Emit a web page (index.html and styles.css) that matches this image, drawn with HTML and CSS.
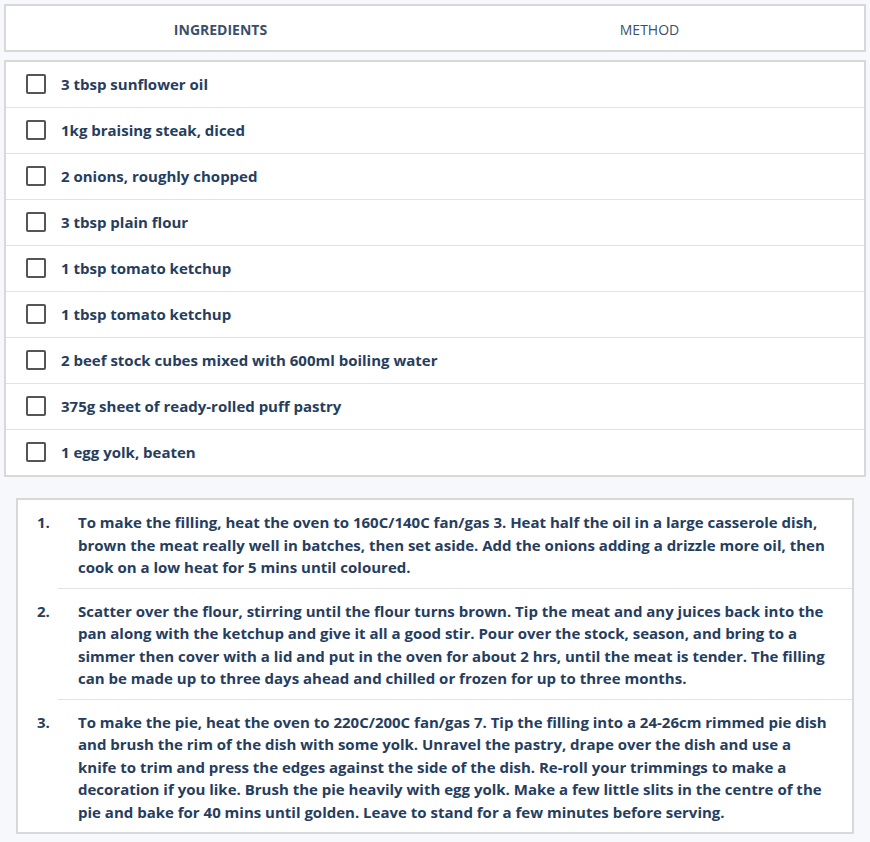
FILE: index.html
```html
<!DOCTYPE html>
<html lang="en">
<head>
<meta charset="utf-8">
<title>Recipe</title>
<link rel="stylesheet" href="styles.css">
</head>
<body>
<div class="page">
  <nav class="tabs">
    <div class="tab active">INGREDIENTS</div>
    <div class="tab">METHOD</div>
  </nav>
  <ul class="ingredients">
    <li><span class="check"></span><span>3 tbsp sunflower oil</span></li>
    <li><span class="check"></span><span>1kg braising steak, diced</span></li>
    <li><span class="check"></span><span>2 onions, roughly chopped</span></li>
    <li><span class="check"></span><span>3 tbsp plain flour</span></li>
    <li><span class="check"></span><span>1 tbsp tomato ketchup</span></li>
    <li><span class="check"></span><span>1 tbsp tomato ketchup</span></li>
    <li><span class="check"></span><span>2 beef stock cubes mixed with 600ml boiling water</span></li>
    <li><span class="check"></span><span>375g sheet of ready-rolled puff pastry</span></li>
    <li><span class="check"></span><span>1 egg yolk, beaten</span></li>
  </ul>
  <ol class="method">
    <li>To make the filling, heat the oven to 160C/140C fan/gas 3. Heat half the oil in a large casserole dish, brown the meat really well in batches, then set aside. Add the onions adding a drizzle more oil, then cook on a low heat for 5 mins until coloured.</li>
    <li>Scatter over the flour, stirring until the flour turns brown. Tip the meat and any juices back into the pan along with the ketchup and give it all a good stir. Pour over the stock, season, and bring to a simmer then cover with a lid and put in the oven for about 2 hrs, until the meat is tender. The filling can be made up to three days ahead and chilled or frozen for up to three months.</li>
    <li>To make the pie, heat the oven to 220C/200C fan/gas 7. Tip the filling into a 24-26cm rimmed pie dish and brush the rim of the dish with some yolk. Unravel the pastry, drape over the dish and use a knife to trim and press the edges against the side of the dish. Re-roll your trimmings to make a decoration if you like. Brush the pie heavily with egg yolk. Make a few little slits in the centre of the pie and bake for 40 mins until golden. Leave to stand for a few minutes before serving.</li>
  </ol>
</div>
</body>
</html>
```
FILE: styles.css
```css
html, body {
  margin: 0;
  padding: 0;
  background: #f7f8fc;
}
body {
  font-family: "Open Sans", "Liberation Sans", sans-serif;
  color: #263d5e;
}
.page {
  padding: 4px 4px 8px;
  display: flex;
  flex-direction: column;
}
.tabs {
  display: grid;
  grid-template-columns: 1fr 1fr;
  height: 44px;
  background: #fff;
  border: 2px solid #d8d8d8;
}
.tab {
  display: flex;
  align-items: center;
  justify-content: center;
  font-size: 14px;
  color: #3a4f6c;
  padding-top: 2px;
}
.tab.active {
  font-weight: 700;
}
.ingredients {
  list-style: none;
  margin: 8px 0 0;
  padding: 0;
  background: #fff;
  border: 2px solid #d8d8d8;
}
.ingredients li {
  display: flex;
  align-items: center;
  gap: 15px;
  padding-left: 20px;
  padding-bottom: 1px;
  box-sizing: border-box;
  height: 46px;
  font-size: 15px;
  font-weight: 700;
  border-top: 1px solid #e2e2e2;
}
.ingredients li:first-child {
  border-top: none;
  height: 45px;
}
.check {
  width: 16px;
  height: 16px;
  border: 2px solid #555;
  border-radius: 2px;
  box-sizing: content-box;
}
.method {
  list-style: none;
  counter-reset: step;
  margin: 21px 12px 0;
  padding: 0 20px 0 40px;
  background: #fff;
  border: 2px solid #d8d8d8;
}
.method li {
  counter-increment: step;
  position: relative;
  padding: 11px 20px 9px 20px;
  margin-right: -20px;
  font-size: 15px;
  font-weight: 700;
  line-height: 22.5px;
  border-top: 1px solid #e2e2e2;
}
.method li:first-child {
  border-top: none;
}
.method li::before {
  content: counter(step) ".";
  position: absolute;
  left: -21px;
  top: 11px;
}
```
